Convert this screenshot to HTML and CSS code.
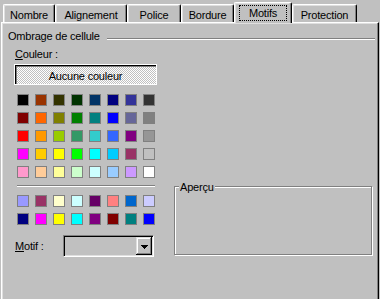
FILE: index.html
```html
<!DOCTYPE html>
<html lang="fr">
<head>
    <meta charset="UTF-8">
    <meta name="viewport" content="width=device-width, initial-scale=1.0">
    <title>Format de cellule - Motifs</title>
    <link rel="stylesheet" href="styles.css">
</head>
<body>
    <div class="tabs">
        <div class="tab tab-nombre">Nombre</div>
        <div class="tab tab-alignement">Alignement</div>
        <div class="tab tab-police">Police</div>
        <div class="tab tab-bordure">Bordure</div>
        <div class="tab tab-motifs active"><span class="focus">Motifs</span></div>
        <div class="tab tab-protection">Protection</div>
    </div>

    <div class="panel">
        <div class="group-title">
            <span>Ombrage de cellule</span>
            <div class="etched-line"></div>
        </div>

        <div class="panel-body">
            <div class="color-col">
                <div class="label"><u>C</u>ouleur :</div>
                <div class="no-color">Aucune couleur</div>

                <div class="swatches">
                    <span class="swatch" style="background:#000000"></span>
                    <span class="swatch" style="background:#993300"></span>
                    <span class="swatch" style="background:#333300"></span>
                    <span class="swatch" style="background:#003300"></span>
                    <span class="swatch" style="background:#003366"></span>
                    <span class="swatch" style="background:#000080"></span>
                    <span class="swatch" style="background:#333399"></span>
                    <span class="swatch" style="background:#333333"></span>

                    <span class="swatch" style="background:#800000"></span>
                    <span class="swatch" style="background:#ff6600"></span>
                    <span class="swatch" style="background:#808000"></span>
                    <span class="swatch" style="background:#008000"></span>
                    <span class="swatch" style="background:#008080"></span>
                    <span class="swatch" style="background:#0000ff"></span>
                    <span class="swatch" style="background:#666699"></span>
                    <span class="swatch" style="background:#808080"></span>

                    <span class="swatch" style="background:#ff0000"></span>
                    <span class="swatch" style="background:#ff9900"></span>
                    <span class="swatch" style="background:#99cc00"></span>
                    <span class="swatch" style="background:#339966"></span>
                    <span class="swatch" style="background:#33cccc"></span>
                    <span class="swatch" style="background:#3366ff"></span>
                    <span class="swatch" style="background:#800080"></span>
                    <span class="swatch" style="background:#969696"></span>

                    <span class="swatch" style="background:#ff00ff"></span>
                    <span class="swatch" style="background:#ffcc00"></span>
                    <span class="swatch" style="background:#ffff00"></span>
                    <span class="swatch" style="background:#00ff00"></span>
                    <span class="swatch" style="background:#00ffff"></span>
                    <span class="swatch" style="background:#00ccff"></span>
                    <span class="swatch" style="background:#993366"></span>
                    <span class="swatch" style="background:#c0c0c0"></span>

                    <span class="swatch" style="background:#ff99cc"></span>
                    <span class="swatch" style="background:#ffcc99"></span>
                    <span class="swatch" style="background:#ffff99"></span>
                    <span class="swatch" style="background:#ccffcc"></span>
                    <span class="swatch" style="background:#ccffff"></span>
                    <span class="swatch" style="background:#99ccff"></span>
                    <span class="swatch" style="background:#cc99ff"></span>
                    <span class="swatch" style="background:#ffffff"></span>
                </div>

                <div class="separator"></div>

                <div class="swatches extra">
                    <span class="swatch" style="background:#9999ff"></span>
                    <span class="swatch" style="background:#993366"></span>
                    <span class="swatch" style="background:#ffffcc"></span>
                    <span class="swatch" style="background:#ccffff"></span>
                    <span class="swatch" style="background:#660066"></span>
                    <span class="swatch" style="background:#ff8080"></span>
                    <span class="swatch" style="background:#0066cc"></span>
                    <span class="swatch" style="background:#ccccff"></span>

                    <span class="swatch" style="background:#000080"></span>
                    <span class="swatch" style="background:#ff00ff"></span>
                    <span class="swatch" style="background:#ffff00"></span>
                    <span class="swatch" style="background:#00ffff"></span>
                    <span class="swatch" style="background:#800080"></span>
                    <span class="swatch" style="background:#800000"></span>
                    <span class="swatch" style="background:#008080"></span>
                    <span class="swatch" style="background:#0000ff"></span>
                </div>

                <div class="motif-row">
                    <span class="motif-label"><u>M</u>otif :</span>
                    <div class="combo">
                        <div class="drop-btn">
                            <svg width="7" height="4" viewBox="0 0 7 4"><path d="M0 0h7v1h-1v1h-1v1h-1v1h-1v-1h-1v-1h-1v-1h-1z" fill="#000"/></svg>
                        </div>
                    </div>
                </div>
            </div>

            <div class="preview-col">
                <div class="preview">
                    <span class="preview-label">Aperçu</span>
                </div>
            </div>
        </div>
    </div>
</body>
</html>
```

FILE: styles.css
```css
body, html {
    margin: 0;
    padding: 0;
    width: 100%;
    height: 100%;
    overflow: hidden;
    background: #c0c0c0;
}
body {
    font-family: "Liberation Sans", Arial, sans-serif;
    font-size: 11px;
    line-height: 13px;
    letter-spacing: -0.2px;
    color: #000;
}

/* tabs */
.tabs {
    display: flex;
    align-items: flex-end;
    height: 22px;
    padding-left: 3px;
}
.tab {
    box-sizing: border-box;
    height: 18px;
    padding-top: 4px;
    text-align: center;
    border-top: 1px solid #fff;
    border-left: 1px solid #fff;
    border-right: 1px solid #000;
    border-radius: 2px 2px 0 0;
    box-shadow: inset -1px 0 #808080, inset 1px 1px #dfdfdf;
}
.tab-nombre { width: 52px; }
.tab-alignement { width: 72px; }
.tab-police { width: 54px; }
.tab-bordure { width: 53px; }
.tab-motifs { width: 58px; }
.tab-protection { width: 65px; }
.tab.active {
    position: relative;
    z-index: 1;
    height: 21px;
    margin-bottom: -1px;
    padding-top: 2px;
    background: #c0c0c0;
    box-shadow: inset -1px 0 #808080, inset 1px 1px #dfdfdf;
}
.focus {
    display: inline-block;
    box-sizing: border-box;
    width: 48px;
    padding-top: 1px;
    border: 1px dotted #000;
}

/* panel */
.panel {
    box-sizing: border-box;
    height: 290px;
    margin: 0 1px;
    padding: 7px 3px 0 6px;
    border-top: 1px solid #fff;
    border-left: 1px solid #fff;
    border-right: 1px solid #000;
    box-shadow: inset -1px 0 #808080, inset 1px 1px #dfdfdf;
}
.group-title {
    display: flex;
    height: 13px;
}
.etched-line {
    flex: 1;
    height: 0;
    margin: 8px 0 0 7px;
    border-top: 1px solid #808080;
    border-bottom: 1px solid #fff;
}
.panel-body {
    display: flex;
}
.color-col {
    width: 143px;
    margin-left: 6px;
}
.label {
    margin: 5px 0 0 1px;
}
.no-color {
    box-sizing: border-box;
    height: 21px;
    margin-top: 3px;
    padding-top: 5px;
    text-align: center;
    border: 1px solid #fff;
    box-shadow: inset 1px 1px #000, inset 2px 2px #808080;
    background-color: #c0c0c0;
    background-image: conic-gradient(#fff 25%, #c0c0c0 0 50%, #fff 0 75%, #c0c0c0 0);
    background-size: 2px 2px;
}
.swatches {
    display: grid;
    grid-template-columns: repeat(8, 12px);
    grid-auto-rows: 12px;
    gap: 6px;
    margin: 9px 0 0 3px;
}
.swatches.extra {
    margin-top: 8px;
}
.swatch {
    box-sizing: border-box;
    border: 1px solid #808080;
}
.separator {
    width: 138px;
    margin: 7px 0 0 3px;
    border-top: 1px solid #808080;
    border-bottom: 1px solid #fff;
}
.motif-row {
    display: flex;
    align-items: center;
    margin-top: 10px;
    padding-left: 1px;
}
.motif-label {
    width: 48px;
}
.combo {
    box-sizing: border-box;
    width: 91px;
    height: 22px;
    padding: 1px;
    display: flex;
    justify-content: flex-end;
    border: 1px solid;
    border-color: #808080 #fff #fff #808080;
    box-shadow: inset 1px 1px #000, inset -1px -1px #dfdfdf;
}
.drop-btn {
    width: 16px;
    height: 18px;
    display: flex;
    align-items: center;
    justify-content: center;
    padding: 1px 0 0 1px;
    box-sizing: border-box;
    background: #c0c0c0;
    box-shadow: inset -1px -1px #000, inset 1px 1px #dfdfdf, inset -2px -2px #808080, inset 2px 2px #fff;
}
.drop-btn svg {
    display: block;
    shape-rendering: crispEdges;
}

/* preview */
.preview-col {
    margin-left: 17px;
}
.preview {
    position: relative;
    box-sizing: border-box;
    width: 198px;
    height: 69px;
    margin-top: 143px;
    border: 1px solid #808080;
    box-shadow: 1px 1px #fff, inset 1px 1px #fff;
}
.preview-label {
    position: absolute;
    top: -6px;
    left: 4px;
    padding: 0 1px;
    background: #c0c0c0;
}
```
